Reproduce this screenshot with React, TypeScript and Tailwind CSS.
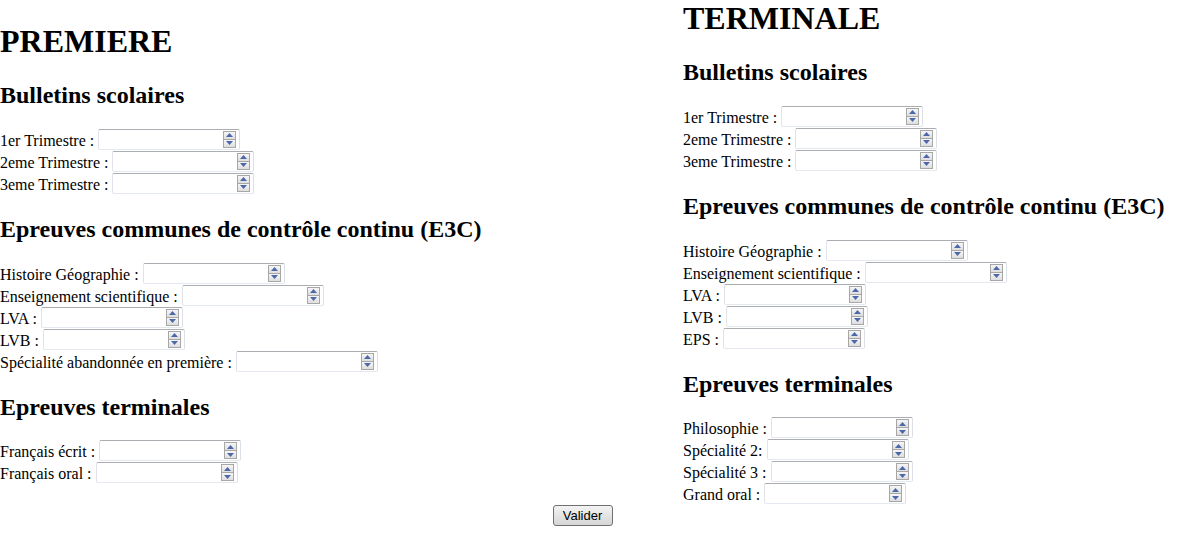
const serif = { fontFamily: '"Liberation Serif", "Times New Roman", serif' };

const NumberField = ({ label }: { label: string }) => {
  return (
    <div className="flex h-[22px] items-end">
      <label className="leading-[normal] whitespace-pre">{label}</label>
      <span className="relative ml-[4px] block h-[21px] w-[142px] rounded-[2px] border border-[#e3e9ef] border-t-[#abadb3] border-l-[#e2e3ea] border-r-[#dbdfe6] bg-white">
        <input
          type="text"
          className="h-full w-full bg-transparent px-[2px] text-[13px] outline-none"
        />
        <span className="absolute top-[1px] right-[3px] flex w-[13px] flex-col">
          <span className="flex h-[9px] items-center justify-center border border-[#a7a7a7] bg-linear-to-b from-[#f6f6f6] to-[#dedede]">
            <svg width="7" height="4" viewBox="0 0 7 4">
              <path d="M3.5 0 L7 4 L0 4 Z" fill="#4c68a8" />
            </svg>
          </span>
          <span className="-mt-px flex h-[9px] items-center justify-center border border-[#a7a7a7] bg-linear-to-b from-[#f6f6f6] to-[#dedede]">
            <svg width="7" height="4" viewBox="0 0 7 4">
              <path d="M0 0 L7 0 L3.5 4 Z" fill="#4c68a8" />
            </svg>
          </span>
        </span>
      </span>
    </div>
  );
};

const Section = ({ title, fields }: { title: string; fields: string[] }) => {
  return (
    <>
      <h2 className="mt-[21.92px] mb-[18.92px] text-[24px] leading-[normal] font-bold">{title}</h2>
      <div>
        {fields.map((f) => (
          <NumberField key={f} label={f} />
        ))}
      </div>
    </>
  );
};

const App = () => {
  return (
    <form className="bg-white text-[16px] text-black" style={serif}>
      <div className="flex items-start">
        <div className="w-[683px] shrink-0">
          <h1 className="mt-[23px] mb-[21.44px] text-[32px] leading-[normal] font-bold">PREMIERE</h1>
          <Section
            title="Bulletins scolaires"
            fields={["1er Trimestre :", "2eme Trimestre :", "3eme Trimestre :"]}
          />
          <Section
            title="Epreuves communes de contrôle continu (E3C)"
            fields={[
              "Histoire Géographie :",
              "Enseignement scientifique :",
              "LVA :",
              "LVB :",
              "Spécialité abandonnée en première :",
            ]}
          />
          <Section title="Epreuves terminales" fields={["Français écrit :", "Français oral :"]} />
        </div>

        <div>
          <h1 className="mb-[21.44px] text-[32px] leading-[normal] font-bold">TERMINALE</h1>
          <Section
            title="Bulletins scolaires"
            fields={["1er Trimestre :", "2eme Trimestre :", "3eme Trimestre :"]}
          />
          <Section
            title="Epreuves communes de contrôle continu (E3C)"
            fields={[
              "Histoire Géographie :",
              "Enseignement scientifique :",
              "LVA :",
              "LVB :",
              "EPS :",
            ]}
          />
          <Section
            title="Epreuves terminales"
            fields={["Philosophie :", "Spécialité 2:", "Spécialité 3 :", "Grand oral :"]}
          />
        </div>
      </div>

      <div className="mt-px flex w-[1165px] justify-center pb-[10px]">
        <button
          type="submit"
          className="h-[21px] w-[60px] rounded-[3px] border border-[#707070] bg-linear-to-b from-[#f3f3f3] to-[#d6d6d6] text-[13px] leading-none"
          style={{ fontFamily: '"Liberation Sans", Arial, sans-serif' }}
        >
          Valider
        </button>
      </div>
    </form>
  );
};

export default App;
